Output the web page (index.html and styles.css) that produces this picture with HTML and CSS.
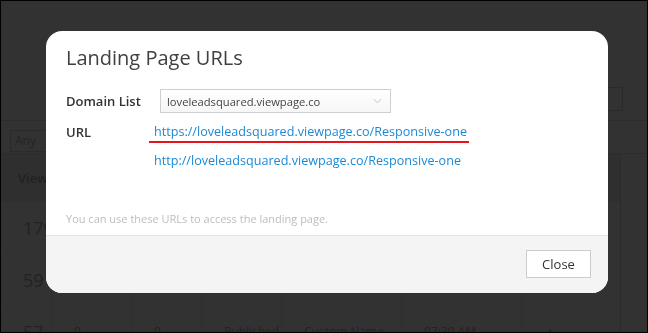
FILE: index.html
```html
<!doctype html>
<html lang="en">
<head>
<title>Landing Pages</title>
<meta charset=UTF-8>
<link rel="stylesheet" href="styles.css">
</head>
<body>
<div class="page">
  <div class="toolbar">
    <span class="pick"></span>
  </div>
  <div class="filters">
    <span class="anybox">Any</span>
  </div>
  <div class="grid">
    <div class="row head"><span>Views</span><span></span><span></span><span></span><span></span><span></span><span></span></div>
    <div class="row"><span>179</span><span></span><span></span><span></span><span></span><span></span><span></span></div>
    <div class="row"><span>59</span><span></span><span></span><span></span><span></span><span></span><span></span></div>
    <div class="row"><span>57</span><span>0</span><span>0</span><span>Published</span><span>Custom Name</span><span>07:30 AM</span><span>&#9650;</span></div>
  </div>
</div>

<div class="overlay">
  <div class="modal">
    <div class="modal-head">
      <h3>Landing Page URLs</h3>
    </div>
    <div class="modal-body">
      <div class="field">
        <label>Domain List</label>
        <div class="select">
          <span>loveleadsquared.viewpage.co</span>
          <svg viewBox="0 0 10 6" width="9" height="6"><polyline points="1,1 5,5 9,1" fill="none" stroke="#bbb" stroke-width="1"/></svg>
        </div>
      </div>
      <div class="field urls">
        <label>URL</label>
        <div class="links">
          <a class="marked" href="#">https://loveleadsquared.viewpage.co/Responsive-one</a>
          <a href="#">http://loveleadsquared.viewpage.co/Responsive-one</a>
        </div>
      </div>
      <p class="hint">You can use these URLs to access the landing page.</p>
    </div>
    <div class="modal-foot">
      <button class="btn">Close</button>
    </div>
  </div>
</div>
</body>
</html>
```

FILE: styles.css
```css
* {box-sizing: border-box;}
html, body {margin: 0; height: 100%;}
body {background: #323232; font-family: "Open Sans", "Noto Sans", sans-serif; overflow: hidden;}

/* dimmed page underneath */
.page {height: 333px; border: 1px solid #000; display: flex; flex-direction: column; color: #1f1f1f; overflow: hidden;}
.toolbar {flex: none; height: 120px; border-bottom: 1px solid #2c2c2c; display: flex; justify-content: flex-end; align-items: flex-end; padding: 0 24px 9px 0;}
.pick {width: 20px; height: 24px; border: 1px solid #2a2a2a;}
.filters {flex: none; height: 33px; padding: 7px 0 0 9px; border-bottom: 1px solid #2d2d2d;}
.anybox {display: inline-block; width: 60px; height: 22px; border: 1px solid #2a2a2a; font-size: 12px; line-height: 20px; padding-left: 4px; color: #242424;}
.grid {flex: none; border-right: 1px solid #2b2b2b; margin-right: 26px;}
.row {display: grid; grid-template-columns: 50px 80px 70px 80px 120px 120px 1fr; height: 52px; align-items: center; border-bottom: 1px solid #303030;}
.row span {font-size: 18px; padding-left: 22px; color: #222;}
.row.head {height: 48px; background: #2f2f2f;}
.row.head span {font-size: 13px; font-weight: 600; padding-left: 17px;}
.row span + span {border-left: 1px solid #2e2e2e; height: 100%; font-size: 12px; display: flex; align-items: center;}

/* modal */
.overlay {position: fixed; inset: 0; padding: 31px 0 0 46px;}
.modal {width: 562px; height: 262px; background: #fff; border-radius: 16px; overflow: hidden; display: flex; flex-direction: column;}
.modal-head {padding: 13px 20px 0;}
.modal-head h3 {margin: 0; font-size: 20px; font-weight: 400; line-height: 28px; color: #404040;}
.modal-body {flex: 1; padding: 17px 20px 0;}
.field {display: grid; grid-template-columns: 94px 1fr; align-items: center;}
.field label {font-size: 13px; font-weight: 600; color: #333;}
.select {width: 231px; height: 24px; border: 1px solid #cfcfcf; background: linear-gradient(#fff, #f6f6f6); display: flex; align-items: center; justify-content: space-between; padding: 0 8px 0 6px;}
.select span {font-size: 11.2px; color: #444;}
.urls {margin-top: 9px; align-items: start;}
.urls label {line-height: 20px;}
.links {display: flex; flex-direction: column; gap: 8px; margin-left: -6px;}
.links a {font-size: 12.6px; line-height: 20px; color: #1a8ad6; text-decoration: none; align-self: flex-start;}
.links a.marked {border-bottom: 2px solid #e8141c; padding: 0 2px 0 5px; margin-left: -5px; line-height: 19px;}
.hint {margin: 40px 0 0; font-size: 11px; color: #bdbdbd;}
.modal-foot {height: 58px; background: #f4f4f4; border-top: 1px solid #e2e2e2; display: flex; justify-content: flex-end; align-items: flex-start; padding: 14px 17px 0 0;}
.btn {width: 65px; height: 28px; background: #fff; border: 1px solid #ccc; font-family: "Open Sans", sans-serif; font-size: 13px; color: #333;}
```
